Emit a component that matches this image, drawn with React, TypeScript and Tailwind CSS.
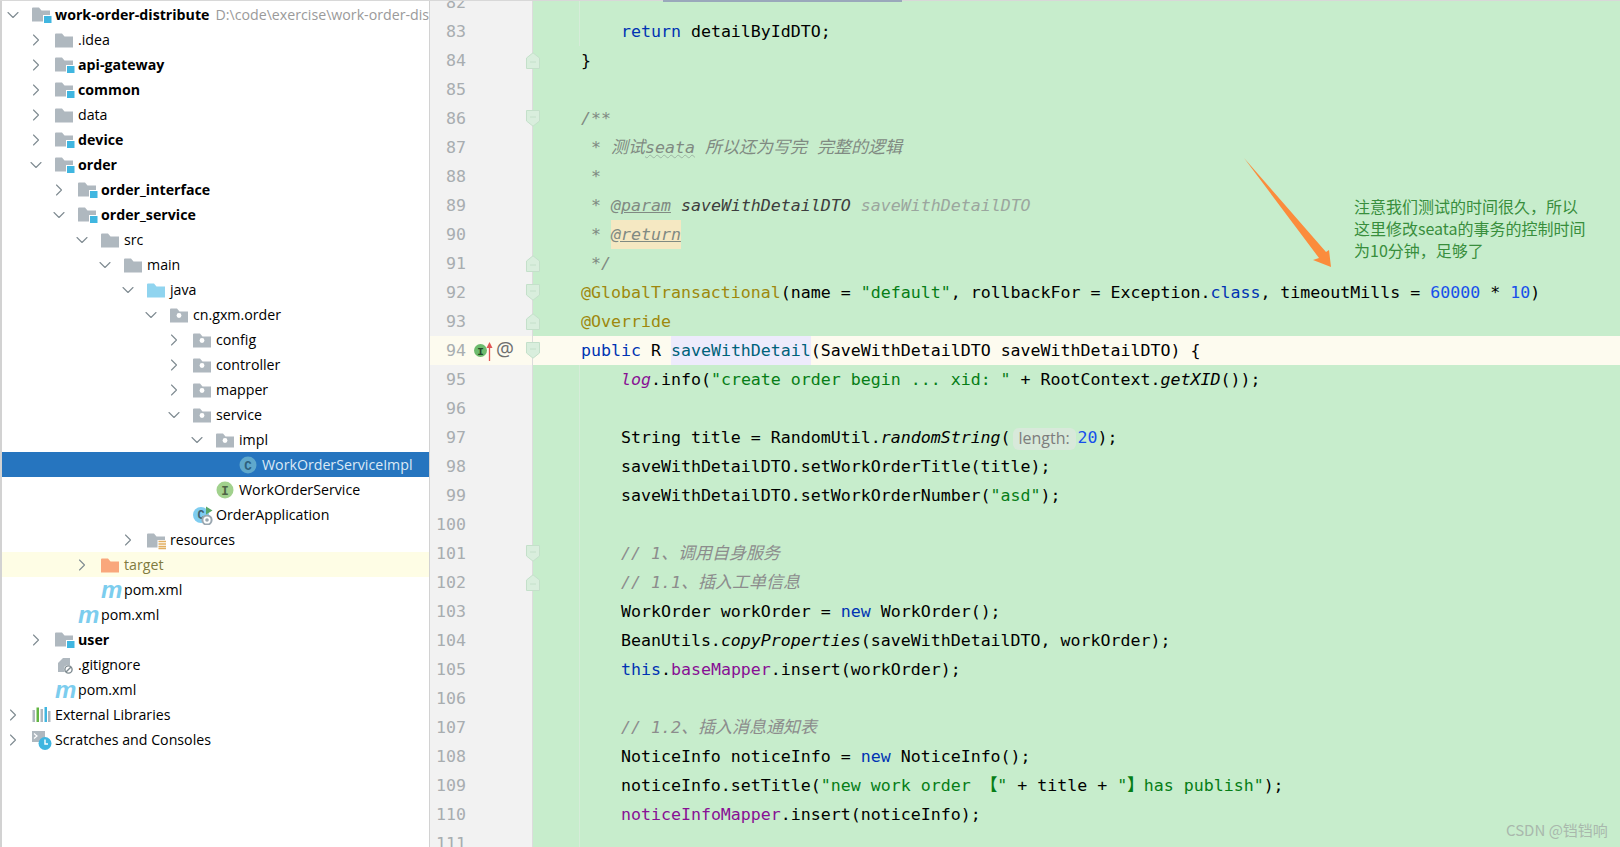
import { ChevronDown, ChevronRight } from "lucide-react";

type IconKind =
  | "folder" | "module" | "java" | "package" | "resources" | "target"
  | "impl" | "iface" | "app" | "maven" | "ignore" | "libs" | "scratch";

type TreeRow = {
  depth: number;
  label: string;
  icon: IconKind;
  open?: boolean;
  bold?: boolean;
  path?: string;
  selected?: boolean;
  excluded?: boolean;
};

const tree: TreeRow[] = [
  { depth: 0, label: "work-order-distribute", icon: "module", open: true, bold: true, path: "D:\\code\\exercise\\work-order-distribute" },
  { depth: 1, label: ".idea", icon: "folder", open: false },
  { depth: 1, label: "api-gateway", icon: "module", open: false, bold: true },
  { depth: 1, label: "common", icon: "module", open: false, bold: true },
  { depth: 1, label: "data", icon: "folder", open: false },
  { depth: 1, label: "device", icon: "module", open: false, bold: true },
  { depth: 1, label: "order", icon: "module", open: true, bold: true },
  { depth: 2, label: "order_interface", icon: "module", open: false, bold: true },
  { depth: 2, label: "order_service", icon: "module", open: true, bold: true },
  { depth: 3, label: "src", icon: "folder", open: true },
  { depth: 4, label: "main", icon: "folder", open: true },
  { depth: 5, label: "java", icon: "java", open: true },
  { depth: 6, label: "cn.gxm.order", icon: "package", open: true },
  { depth: 7, label: "config", icon: "package", open: false },
  { depth: 7, label: "controller", icon: "package", open: false },
  { depth: 7, label: "mapper", icon: "package", open: false },
  { depth: 7, label: "service", icon: "package", open: true },
  { depth: 8, label: "impl", icon: "package", open: true },
  { depth: 9, label: "WorkOrderServiceImpl", icon: "impl", selected: true },
  { depth: 8, label: "WorkOrderService", icon: "iface" },
  { depth: 7, label: "OrderApplication", icon: "app" },
  { depth: 5, label: "resources", icon: "resources", open: false },
  { depth: 3, label: "target", icon: "target", open: false, excluded: true },
  { depth: 3, label: "pom.xml", icon: "maven" },
  { depth: 2, label: "pom.xml", icon: "maven" },
  { depth: 1, label: "user", icon: "module", open: false, bold: true },
  { depth: 1, label: ".gitignore", icon: "ignore" },
  { depth: 1, label: "pom.xml", icon: "maven" },
  { depth: 0, label: "External Libraries", icon: "libs", open: false },
  { depth: 0, label: "Scratches and Consoles", icon: "scratch", open: false },
];

const FOLDER = "M0 1.5 Q0 0.5 1 0.5 H7 L9.5 3.5 H18 V14.5 H0 Z";

function TreeIcon({ kind, selected }: { kind: IconKind; selected?: boolean }) {
  if (kind === "maven") {
    return <span className="block h-[20px] w-[20px] text-center font-['Liberation_Sans',sans-serif] text-[24px] leading-[19px] font-bold italic text-[#7ccdee]">m</span>;
  }
  return (
    <svg width="20" height="20" viewBox="0 0 20 20" className="block">
      {kind === "folder" && <path d={FOLDER} transform="translate(0 3)" fill="#afb8bf" />}
      {kind === "module" && (
        <>
          <path d={FOLDER} transform="translate(0 2)" fill="#afb8bf" />
          <rect x="11" y="10" width="8.5" height="8" fill="#ffffff" />
          <rect x="12" y="11" width="7.5" height="7" fill="#40b6e0" />
        </>
      )}
      {kind === "java" && <path d={FOLDER} transform="translate(0 3)" fill="#90d4ef" />}
      {kind === "package" && (
        <>
          <path d={FOLDER} transform="translate(0 3)" fill="#afb8bf" />
          <circle cx="9" cy="10.5" r="2.4" fill="#ffffff" />
        </>
      )}
      {kind === "resources" && (
        <>
          <path d={FOLDER} transform="translate(0 3)" fill="#afb8bf" />
          <rect x="10.5" y="10" width="9" height="9" fill="#ffffff" />
          <path d="M11.5 11.5H19M11.5 14H19M11.5 16.5H19M11.5 18.5H19" stroke="#e2b063" strokeWidth="1.3" />
        </>
      )}
      {kind === "target" && <path d={FOLDER} transform="translate(0 3)" fill="#f9a77c" />}
      {kind === "impl" && (
        <>
          <circle cx="9" cy="10" r="8.5" fill={selected ? "#5fa8cc" : "#6fc3e6"} />
          <text x="9" y="14.5" textAnchor="middle" fontSize="12.5" fontWeight="700" fontFamily="Liberation Mono, monospace" fill="#2d5f7d">C</text>
        </>
      )}
      {kind === "iface" && (
        <>
          <circle cx="9" cy="10" r="8.5" fill="#a1d18d" />
          <text x="9" y="14.5" textAnchor="middle" fontSize="12.5" fontWeight="700" fontFamily="Liberation Mono, monospace" fill="#4e6345">I</text>
        </>
      )}
      {kind === "app" && (
        <>
          <circle cx="8" cy="10" r="8" fill="#7fcdf0" />
          <text x="8" y="14" textAnchor="middle" fontSize="12" fontWeight="700" fontFamily="Liberation Mono, monospace" fill="#40616f">C</text>
          <path d="M13 1.5 L19.5 5.5 L13 9.5 Z" fill="#59a869" />
          <circle cx="14" cy="15" r="4.6" fill="#ffffff" stroke="#9aa7b0" strokeWidth="2" />
          <circle cx="14" cy="15" r="1.8" fill="#9aa7b0" />
        </>
      )}
      {kind === "ignore" && (
        <>
          <path d="M3 8 L8 3 H15 V17 H3 Z" fill="#afb8bf" />
          <circle cx="13.5" cy="14.5" r="4.6" fill="#ffffff" />
          <circle cx="13.5" cy="14.5" r="3.6" fill="none" stroke="#7f8b91" strokeWidth="1.4" />
          <path d="M11 17 L16 12" stroke="#7f8b91" strokeWidth="1.4" />
        </>
      )}
      {kind === "libs" && (
        <>
          <rect x="0.5" y="5" width="2.5" height="12" fill="#afb8bf" />
          <rect x="4.5" y="2.5" width="2.5" height="14.5" fill="#62b543" />
          <rect x="8.5" y="4" width="2.5" height="13" fill="#afb8bf" />
          <rect x="12.5" y="2" width="2.5" height="15" fill="#40b6e0" />
          <rect x="16" y="6" width="2.5" height="11" fill="#afb8bf" />
        </>
      )}
      {kind === "scratch" && (
        <>
          <rect x="0" y="1" width="13" height="11" fill="#afb8bf" />
          <path d="M2 3.5 L5 6 L2 8.5" fill="none" stroke="#ffffff" strokeWidth="1.2" />
          <circle cx="13" cy="13.5" r="6.5" fill="#40b6e0" />
          <path d="M13 9.5 V14 H16" fill="none" stroke="#ffffff" strokeWidth="1.4" />
        </>
      )}
    </svg>
  );
}

const KW = "text-[#0033b3]";
const STR = "text-[#067d17]";
const ANN = "text-[#9e880d]";
const DOC = "italic text-[#808a82]";
const CMT = "italic text-[#8c8c8c]";
const FLD = "text-[#871094]";
const NUM = "text-[#1750eb]";
const IT = "italic";
const CJK = " text-[17px]";

type Tok = [string, string?];
type Fold = "open" | "close";

const code: { n: number; toks?: Tok[]; fold?: Fold; guide?: boolean; current?: boolean }[] = [
  { n: 82, guide: true },
  { n: 83, guide: true, toks: [["    "], ["return", KW], [" detailByIdDTO;"]] },
  { n: 84, fold: "close", toks: [["}"]] },
  { n: 85 },
  { n: 86, fold: "open", toks: [["/**", DOC]] },
  { n: 87, toks: [[" * ", DOC], ["测试", DOC + CJK], ["seata", DOC + " underline decoration-wavy decoration-[#9db5a3] decoration-1"], [" ", DOC], ["所以还为写完", DOC + CJK], [" ", DOC], ["完整的逻辑", DOC + CJK]] },
  { n: 88, toks: [[" *", DOC]] },
  { n: 89, toks: [[" * ", DOC], ["@param", DOC + " underline"], [" "], ["saveWithDetailDTO", "italic text-[#3d3d3d]"], [" saveWithDetailDTO", "italic text-[#9ba69e]"]] },
  { n: 90, toks: [[" * ", DOC], ["@return", DOC + " underline inline-block bg-[#f5e8c2]"]] },
  { n: 91, fold: "close", toks: [[" */", DOC]] },
  { n: 92, fold: "open", toks: [["@GlobalTransactional", ANN], ["(name = "], ['"default"', STR], [", rollbackFor = Exception."], ["class", KW], [", timeoutMills = "], ["60000", NUM], [" * "], ["10", NUM], [")"]] },
  { n: 93, fold: "close", toks: [["@Override", ANN]] },
  { n: 94, fold: "open", current: true, toks: [["public", KW], [" R "], ["saveWithDetail", "text-[#00627a] inline-block bg-[#edebfc]"], ["(SaveWithDetailDTO saveWithDetailDTO) {"]] },
  { n: 95, guide: true, toks: [["    "], ["log", "italic text-[#871094]"], [".info("], ['"create order begin ... xid: "', STR], [" + RootContext."], ["getXID", IT], ["());"]] },
  { n: 96, guide: true },
  { n: 97, guide: true, toks: [["    String title = RandomUtil."], ["randomString", IT], ["("], ["length:", "hint"], ["20", NUM], [");"]] },
  { n: 98, guide: true, toks: [["    saveWithDetailDTO.setWorkOrderTitle(title);"]] },
  { n: 99, guide: true, toks: [["    saveWithDetailDTO.setWorkOrderNumber("], ['"asd"', STR], [");"]] },
  { n: 100, guide: true },
  { n: 101, guide: true, fold: "open", toks: [["    "], ["// 1", CMT], ["、调用自身服务", CMT + CJK]] },
  { n: 102, guide: true, fold: "close", toks: [["    "], ["// 1.1", CMT], ["、插入工单信息", CMT + CJK]] },
  { n: 103, guide: true, toks: [["    WorkOrder workOrder = "], ["new", KW], [" WorkOrder();"]] },
  { n: 104, guide: true, toks: [["    BeanUtils."], ["copyProperties", IT], ["(saveWithDetailDTO, workOrder);"]] },
  { n: 105, guide: true, toks: [["    "], ["this", KW], ["."], ["baseMapper", FLD], [".insert(workOrder);"]] },
  { n: 106, guide: true },
  { n: 107, guide: true, toks: [["    "], ["// 1.2", CMT], ["、插入消息通知表", CMT + CJK]] },
  { n: 108, guide: true, toks: [["    NoticeInfo noticeInfo = "], ["new", KW], [" NoticeInfo();"]] },
  { n: 109, guide: true, toks: [["    noticeInfo.setTitle("], ['"new work order ', STR], ["【", STR + " font-bold"], ['"', STR], [" + title + "], ['"', STR], ["】", STR + " font-bold"], ['has publish"', STR], [");"]] },
  { n: 110, guide: true, toks: [["    "], ["noticeInfoMapper", FLD], [".insert(noticeInfo);"]] },
  { n: 111, guide: true },
];

function FoldMark({ kind }: { kind: Fold }) {
  return (
    <svg width="14" height="17" viewBox="0 0 14 17" className="absolute -right-[8px] top-[6px]">
      <path
        d={kind === "open" ? "M.5 .5H13.5V11L7 16.2 .5 11Z" : "M.5 16.5H13.5V6L7 .8 .5 6Z"}
        fill="#d9eedd"
        stroke="#c4e0ca"
      />
      <path d={kind === "open" ? "M4 7H10" : "M4 10H10"} stroke="#c4e0ca" />
    </svg>
  );
}

export default function App() {
  return (
    <div className="relative flex h-[847px] w-[1620px] overflow-hidden bg-white">
      <aside className="w-[430px] shrink-0 border-l-2 border-r border-[#d2d2d2] pt-[2px] font-['Open_Sans',sans-serif] text-[14.2px] text-black">
        {tree.map((row, i) => (
          <div
            key={i}
            className={`flex h-[25px] items-center overflow-hidden whitespace-nowrap ${row.selected ? "bg-[#2675bf] text-[#dbe9f6]" : row.excluded ? "bg-[#fefde5] text-[#7f7a3f]" : ""}`}
            style={{ paddingLeft: 3 + row.depth * 23 }}
          >
            <span className="flex w-[15px] shrink-0 justify-center text-[#7f8b91]">
              {row.open === true && <ChevronDown size={20} strokeWidth={1.3} className="shrink-0" />}
              {row.open === false && <ChevronRight size={20} strokeWidth={1.3} className="shrink-0" />}
            </span>
            <span className="ml-[12px] w-[23px] shrink-0">
              <TreeIcon kind={row.icon} selected={row.selected} />
            </span>
            <span className={row.bold ? "font-bold" : ""}>{row.label}</span>
            {row.path && <span className="ml-[6px] text-[#9a9a9a]">{row.path}</span>}
          </div>
        ))}
      </aside>

      <main className="flex-1 bg-[#c7edcc] font-['DejaVu_Sans_Mono','Noto_Sans_CJK_SC',monospace] text-[16.6px] text-black">
        <div className="-mt-[12px]">
          {code.map((line) => (
            <div key={line.n} className={`flex h-[29px] leading-[29px] ${line.current ? "bg-[#fdfbef]" : ""}`}>
              <div className={`relative flex w-[103px] shrink-0 border-r border-[#dcdcdc] ${line.current ? "" : "bg-[#f2f2f2]"}`}>
                <span className="w-[36px] text-right text-[#a8adb0]">{line.n}</span>
                {line.current && (
                  <span className="ml-[7px] flex items-center">
                    <svg width="24" height="22" viewBox="0 0 24 22" className="block">
                      <circle cx="7.5" cy="10.5" r="6.5" fill="#6dbb6d" />
                      <text x="7.5" y="14.5" textAnchor="middle" fontSize="11" fontWeight="700" fontFamily="Liberation Mono, monospace" fill="#24482a">I</text>
                      <path d="M16.5 21V6" stroke="#e05555" strokeWidth="1.3" />
                      <path d="M13.5 8L16.5 2L19.5 8Z" fill="#e05555" />
                    </svg>
                    <span className="-mt-[5px] ml-[-1px] font-['Open_Sans',sans-serif] text-[20px] text-[#6e6e6e]">@</span>
                  </span>
                )}
                {line.fold && <FoldMark kind={line.fold} />}
              </div>
              <div className="relative flex-1 whitespace-pre pl-[48px]">
                {line.guide && <span className="absolute left-[46px] top-0 h-full w-px bg-[#d6ecd9]" />}
                {line.toks?.map(([text, cls], i) =>
                  cls === "hint" ? (
                    <span key={i} className="mx-[2px] inline-flex h-[22px] w-[63px] items-center justify-center rounded-md bg-[#d8e9da] align-middle font-['Open_Sans',sans-serif] text-[16px] text-[#7d7d7d]">
                      {text}
                    </span>
                  ) : (
                    <span key={i} className={cls}>{text}</span>
                  )
                )}
              </div>
            </div>
          ))}
        </div>
      </main>

      {/* overlays: scroll thumb, hand drawn arrow and note, watermark */}
      <div className="absolute left-0 top-0 h-px w-full bg-[#d8d8d8]" />
      <div className="absolute left-[663px] top-0 h-[2px] w-[239px] bg-[#9aa8bb]" />
      <svg width="1620" height="847" className="pointer-events-none absolute left-0 top-0">
        <polygon points="1244,158 1326,252 1329,250 1331,267 1313,260 1319,258" fill="#fb8c3c" />
      </svg>
      <div className="absolute left-[1354px] top-[195px] font-['Noto_Sans_CJK_SC',sans-serif] text-[16px] leading-[22px] text-[#388e3c]">
        <p>注意我们测试的时间很久，所以</p>
        <p>这里修改seata的事务的控制时间</p>
        <p>为10分钟，足够了</p>
      </div>
      <div className="absolute left-[1506px] top-[820px] font-['Noto_Sans_CJK_SC',sans-serif] text-[15px] leading-[20px] text-[#a9b8ac]">
        CSDN @铛铛响
      </div>
    </div>
  );
}
